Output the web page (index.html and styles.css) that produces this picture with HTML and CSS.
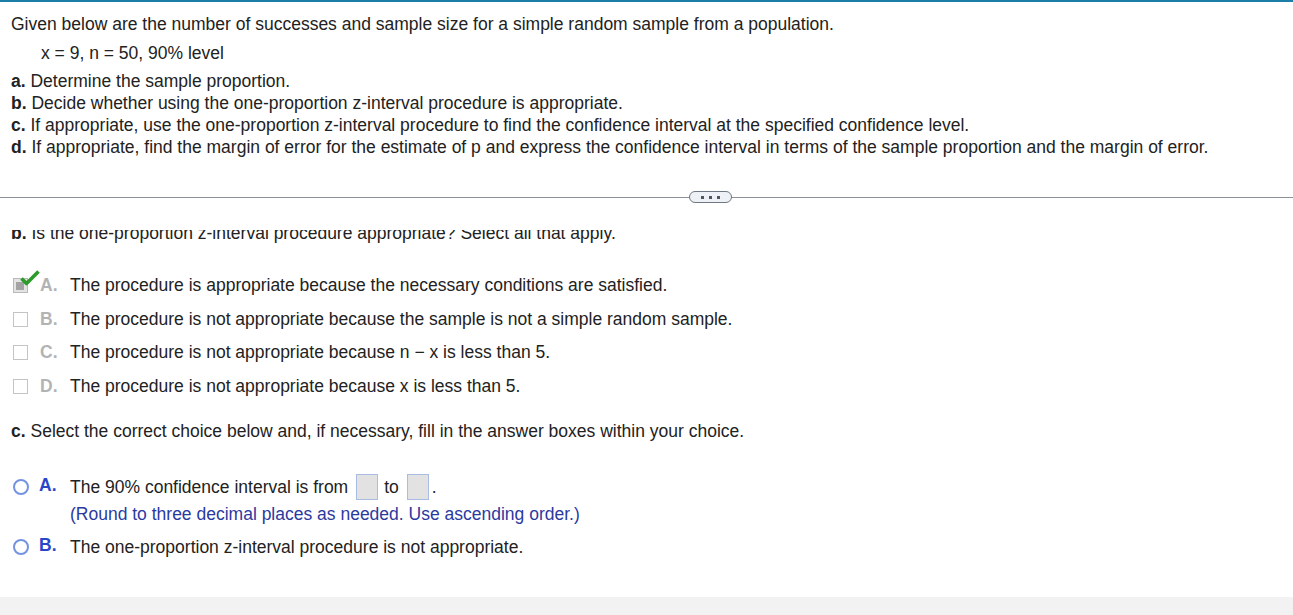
FILE: index.html
```html
<!DOCTYPE html>
<html lang="en">
<head>
    <meta charset="UTF-8">
    <title>Question</title>
    <link rel="stylesheet" href="styles.css">
</head>
<body>
<div class="page">
    <div class="question">
        <p class="intro">Given below are the number of successes and sample size for a simple random sample from a population.</p>
        <p class="data">x = 9, n = 50, 90% level</p>
        <ul class="parts">
            <li><b>a.</b> Determine the sample proportion.</li>
            <li><b>b.</b> Decide whether using the one-proportion z-interval procedure is appropriate.</li>
            <li><b>c.</b> If appropriate, use the one-proportion z-interval procedure to find the confidence interval at the specified confidence level.</li>
            <li><b>d.</b> If appropriate, find the margin of error for the estimate of p and express the confidence interval in terms of the sample proportion and the margin of error.</li>
        </ul>
    </div>
    <div class="divider">
        <span class="more-btn"><i></i><i></i><i></i></span>
    </div>
    <div class="answer-pane">
        <div class="answer-inner">
            <p class="prompt"><b>b.</b> Is the one-proportion z-interval procedure appropriate? Select all that apply.</p>
            <ul class="choices">
                <li class="choice">
                    <span class="checkbox checked">
                        <svg class="tick" width="20" height="16" viewBox="0 0 20 16"><path d="M1.5 8.5 L6.5 13.5 L18.5 1.5" fill="none" stroke="#2c9b2c" stroke-width="3.6" stroke-linejoin="round"/></svg>
                    </span>
                    <span class="letter">A.</span>
                    <span>The procedure is appropriate because the necessary conditions are satisfied.</span>
                </li>
                <li class="choice">
                    <span class="checkbox"></span>
                    <span class="letter">B.</span>
                    <span>The procedure is not appropriate because the sample is not a simple random sample.</span>
                </li>
                <li class="choice">
                    <span class="checkbox"></span>
                    <span class="letter">C.</span>
                    <span>The procedure is not appropriate because n &minus; x is less than 5.</span>
                </li>
                <li class="choice">
                    <span class="checkbox"></span>
                    <span class="letter">D.</span>
                    <span>The procedure is not appropriate because x is less than 5.</span>
                </li>
            </ul>
            <p class="prompt part-c"><b>c.</b> Select the correct choice below and, if necessary, fill in the answer boxes within your choice.</p>
            <ul class="radios">
                <li class="radio-item">
                    <span class="radio"></span>
                    <span class="radio-letter">A.</span>
                    <div class="radio-body">
                        <div class="radio-line">The 90% confidence interval is from <span class="answer-box"></span> to <span class="answer-box"></span>.</div>
                        <div class="hint">(Round to three decimal places as needed. Use ascending order.)</div>
                    </div>
                </li>
                <li class="radio-item single">
                    <span class="radio"></span>
                    <span class="radio-letter">B.</span>
                    <div class="radio-body">
                        <div class="radio-line">The one-proportion z-interval procedure is not appropriate.</div>
                    </div>
                </li>
            </ul>
        </div>
    </div>
    <div class="footer"></div>
</div>
</body>
</html>
```

FILE: styles.css
```css
* {
    margin: 0;
    padding: 0;
    box-sizing: border-box;
}
body {
    font-family: 'Liberation Sans', Arial, sans-serif;
    font-size: 17.5px;
    color: #222;
    background: #fff;
}
.page {
    border-top: 2px solid #1a7ea6;
    height: 615px;
    display: flex;
    flex-direction: column;
}
.question {
    padding: 11px 11px 0;
    line-height: 22px;
}
.data {
    margin: 7px 0 0 30px;
}
.parts {
    list-style: none;
    margin-top: 6px;
}
.divider {
    margin-top: 24px;
    height: 30px;
    position: relative;
    display: flex;
    align-items: center;
}
.divider::before {
    content: '';
    position: absolute;
    left: 0;
    right: 0;
    top: 50%;
    border-top: 1px solid #8c9097;
}
.more-btn {
    position: relative;
    margin-left: 689px;
    width: 43px;
    height: 12px;
    border: 1px solid #6f7782;
    border-radius: 6px;
    background: #eef1f5;
    display: flex;
    justify-content: center;
    align-items: center;
    gap: 5px;
}
.more-btn i {
    width: 3px;
    height: 3px;
    background: #4e5660;
}
.answer-pane {
    flex: 1;
    overflow: hidden;
    margin-top: 18px;
}
.answer-inner {
    margin-top: -8px;
    padding-left: 11px;
}
.prompt {
    line-height: 22px;
}
.choices {
    list-style: none;
    margin-top: 25px;
}
.choice {
    height: 33.5px;
    display: flex;
    align-items: center;
}
.checkbox {
    position: relative;
    width: 15px;
    height: 15px;
    border: 1px solid #c4c4c4;
    background: #fff;
    margin-left: 2px;
}
.checkbox.checked {
    background: #e4e4e4;
    border-color: #b9b9b9;
}
.checkbox.checked::after {
    content: '';
    position: absolute;
    left: 2px;
    top: 3px;
    width: 8px;
    height: 8px;
    background: #a3a3a3;
}
.tick {
    position: absolute;
    left: 6px;
    top: -9px;
    z-index: 1;
}
.letter {
    width: 30px;
    margin-left: 12px;
    font-weight: bold;
    color: #b3b3b3;
}
.part-c {
    margin-top: 17px;
}
.radios {
    list-style: none;
    margin-top: 31px;
}
.radio-item {
    display: flex;
    align-items: flex-start;
}
.radio-item + .radio-item {
    margin-top: 11px;
}
.radio {
    width: 16px;
    height: 16px;
    border: 2px solid #7393e2;
    border-radius: 50%;
    margin: 6px 0 0 2px;
}
.radio-letter {
    width: 31px;
    margin-left: 10px;
    font-weight: bold;
    color: #2a46c8;
    line-height: 22px;
    margin-top: 1px;
}
.radio-line {
    line-height: 28px;
    display: flex;
    align-items: center;
}
.single .radio-line {
    line-height: 22px;
}
.single .radio {
    margin-top: 3px;
}
.single .radio-letter {
    margin-top: -2px;
}
.answer-box {
    display: inline-block;
    width: 22px;
    height: 26px;
    background: #e2e2e2;
    border: 1px solid #a9bde4;
    margin: 0 6px 0 8px;
}
.answer-box:last-child {
    margin-right: 3px;
}
.hint {
    color: #2b3a9f;
    line-height: 22px;
    margin-top: 2px;
}
.footer {
    height: 18px;
    background: #f2f2f2;
}
```
